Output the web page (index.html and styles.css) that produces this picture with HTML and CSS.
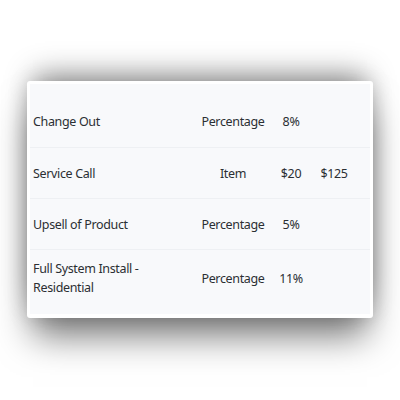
FILE: index.html
```html
<!DOCTYPE html>
<html>
<head>
<meta charset="utf-8">
<link rel="stylesheet" href="styles.css">
</head>
<body>
<div class="card">
  <div class="inner">
    <div class="row first">
      <div class="name">Change Out</div>
      <div class="type">Percentage</div>
      <div class="val">8%</div>
      <div class="extra"></div>
    </div>
    <div class="row">
      <div class="name">Service Call</div>
      <div class="type">Item</div>
      <div class="val">$20</div>
      <div class="extra">$125</div>
    </div>
    <div class="row">
      <div class="name">Upsell of Product</div>
      <div class="type">Percentage</div>
      <div class="val">5%</div>
      <div class="extra"></div>
    </div>
    <div class="row last">
      <div class="name">Full System Install -<br>Residential</div>
      <div class="type">Percentage</div>
      <div class="val">11%</div>
      <div class="extra"></div>
    </div>
  </div>
</div>
</body>
</html>
```
FILE: styles.css
```css
html, body {
  margin: 0;
  padding: 0;
  background: #ffffff;
}
body {
  width: 400px;
  height: 400px;
  font-family: "Noto Sans", "Open Sans", sans-serif;
  font-size: 12.5px;
  letter-spacing: -0.35px;
  color: #2b2f33;
  padding-top: 81px;
  box-sizing: border-box;
}
.card {
  margin-left: 27px;
  width: 346px;
  background: #ffffff;
  border-radius: 3px;
  padding: 3px 3px 4px 3px;
  box-sizing: border-box;
  box-shadow:
    0 -14px 28px -8px rgba(0, 0, 0, 0.42),
    0 24px 34px -6px rgba(0, 0, 0, 0.52),
    0 0 22px rgba(0, 0, 0, 0.12);
}
.inner {
  background: #f8f9fb;
}
.row {
  display: grid;
  grid-template-columns: 168px 70px 46px 40px 1fr;
  align-items: center;
  height: 50px;
  border-bottom: 1px solid #eef0f3;
}
.row.first {
  height: 64px;
  padding-top: 12px;
  box-sizing: border-box;
}
.row.last {
  height: 64px;
  padding-bottom: 8px;
  box-sizing: border-box;
  border-bottom: none;
}
.name {
  padding-left: 3px;
  line-height: 19px;
}
.type, .val, .extra {
  text-align: center;
}
```
